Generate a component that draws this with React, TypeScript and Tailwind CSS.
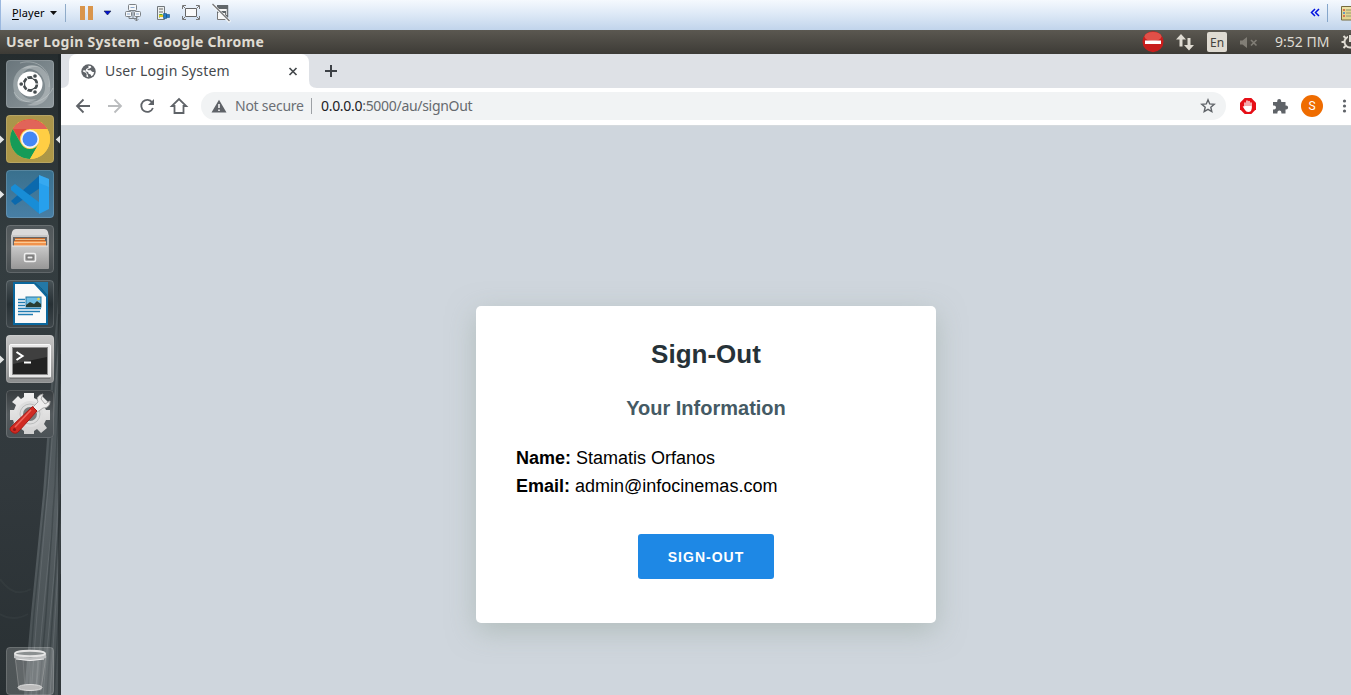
import type { ReactNode } from "react";

const ubuntu = "font-['Noto_Sans',sans-serif]";

function TileFrame({ children, tone, left, right }: { children: ReactNode; tone: string; left?: boolean; right?: boolean }) {
  return (
    <div className="relative h-12 w-12 shrink-0">
      {left && (
        <svg className="absolute -left-1.5 top-5" width="5" height="9" viewBox="0 0 5 9"><path d="M0 .5 4.2 4.5 0 8.5Z" fill="#e4e6e6" /></svg>
      )}
      {right && (
        <svg className="absolute left-[49px] top-5" width="5" height="9" viewBox="0 0 5 9"><path d="M5 .5 .8 4.5 5 8.5Z" fill="#e4e6e6" /></svg>
      )}
      <div className={`h-12 w-12 overflow-hidden rounded-[4px] ${tone}`}>
        <svg width="48" height="48" viewBox="0 0 48 48">
          {children}
          <rect x=".5" y=".5" width="47" height="47" rx="3.5" fill="none" stroke="#fff" strokeOpacity=".15" />
        </svg>
      </div>
    </div>
  );
}

function Launcher() {
  return (
    <aside className="relative flex w-[61px] shrink-0 flex-col gap-[7px] overflow-hidden bg-[#2c3335] pl-1.5 pt-1.5">
      <svg className="absolute inset-0" width="61" height="641" viewBox="0 0 61 641">
        <defs>
          <linearGradient id="wall" x1="0" y1="0" x2="0" y2="1">
            <stop offset="0" stopColor="#252c2e" /><stop offset=".3" stopColor="#343d40" /><stop offset=".65" stopColor="#32393d" /><stop offset="1" stopColor="#293033" />
          </linearGradient>
          <linearGradient id="beam" x1="0" y1="0" x2="0" y2="1">
            <stop offset="0" stopColor="#454e51" /><stop offset=".55" stopColor="#555d61" /><stop offset="1" stopColor="#474f52" />
          </linearGradient>
        </defs>
        <rect width="61" height="641" fill="url(#wall)" />
        <path d="M61 215 54 290 43 440 31 560 24 641H61Z" fill="url(#beam)" />
        <path d="M61 260 51 400 37 560 31 641M61 330 53 460 42 570 36 641M61 400 54 520 43 641M61 470 50 641" stroke="#747b7e" strokeOpacity=".45" fill="none" />
        <path d="M59 260 47 430 34 560 28 641M61 300 55 430 46 560 39 641M61 440 47 641M61 520 54 641" stroke="#343c3f" strokeOpacity=".6" strokeWidth="1.5" fill="none" />
        <path d="M0 525Q14 545 31 535M0 560Q14 568 28 560" stroke="#4a5357" strokeOpacity=".2" fill="none" strokeWidth="2" />
        <path d="M59.5 0V641" stroke="#191f21" strokeOpacity=".5" strokeWidth="3" />
      </svg>
      <TileFrame tone="bg-linear-to-br from-[#69757b] to-[#8e989c]">
        <path d="M8 31C3 11 22-1 37 9 26 3 14 11 13 24 12 34 20 41 31 39 18 46 8 40 8 31Z" fill="#e0e5e7" opacity=".32" />
        <path d="M16 9C27 0 43 8 44 24 46 39 35 48 21 45 35 42 42 32 38 21 35 11 25 7 16 9Z" fill="#e1e5e6" opacity=".34" />
        <path d="M8 32C16 47 39 45 47 28M14 3C31-2 46 10 43 27" stroke="#dce1e2" opacity=".35" fill="none" />
        <circle cx="24" cy="24" r="12.5" fill="#fff" />
        <circle cx="24.4" cy="24" r="6.5" fill="none" stroke="#464d50" strokeWidth="2.8" />
        <g stroke="#fff" strokeWidth="1.1"><path d="M24.4 24H34M24.4 24 19.6 15.7M24.4 24 19.6 32.3" /><circle cx="15.2" cy="24" r="2.4" fill="#464d50" /><circle cx="29" cy="16" r="2.4" fill="#464d50" /><circle cx="29" cy="32" r="2.4" fill="#464d50" /></g>
        <circle cx="24.4" cy="24" r="5" fill="#fff" />
      </TileFrame>
      <TileFrame tone="bg-linear-to-b from-[#aa954b] to-[#ad9746]" left right>
        <circle cx="24" cy="24" r="20" fill="#ffce44" />
        <path d="M6.7 14A20 20 0 0 1 41.3 14H24A10 10 0 0 0 15.3 29Z" fill="#dd4b3e" />
        <path d="M6.7 14 15.3 29A10 10 0 0 0 32.7 29L24 44A20 20 0 0 1 6.7 14Z" fill="#159b58" />
        <path d="M24 14H41.3A20 20 0 0 1 24 44L32.7 29A10 10 0 0 0 24 14Z" fill="#ffce44" />
        <path d="M7 14A20 20 0 0 1 41 14Z" fill="#fff" opacity=".14" />
        <circle cx="24" cy="24" r="9.2" fill="#f3f4f2" /><circle cx="24" cy="24" r="7.5" fill="#4387f5" />
      </TileFrame>
      <TileFrame tone="bg-linear-to-b from-[#39708d] to-[#487fa5]" left>
        <path d="m5 31 4 4L34 18V5Z" fill="#0b69ad" />
        <path d="M5 17 9 14 34 33V44L31 42 5 20Z" fill="#188dd6" /><path d="M33 5 43 9V39L33 44Z" fill="#27a0ed" /><path d="M33 5 43 9V17L33 13Z" fill="#45b2f5" opacity=".5" />
      </TileFrame>
      <TileFrame tone="bg-linear-to-b from-[#50575a] via-[#5a5f61] to-[#454c4f]">
        <defs><linearGradient id="cab" x1="0" y1="0" x2="0" y2="1"><stop stopColor="#c9c9c9" /><stop offset="1" stopColor="#999" /></linearGradient></defs>
        <path d="M6 7Q7 4 10 4H38Q41 4 42 7L43 12H5Z" fill="#dadada" /><rect x="5" y="10" width="38" height="34" rx="1" fill="url(#cab)" />
        <rect x="7" y="12" width="34" height="10" fill="#666" /><path d="M9 13H39V21H9Z" fill="#c66b2c" /><path d="M8 16H40V22H8Z" fill="#f0934d" /><path d="M9 14.5H39M8 17.5H40" stroke="#ffe0b0" strokeOpacity=".7" />
        <path d="M6 21H42V43H6Z" fill="url(#cab)" /><path d="M6 21H42" stroke="#ececec" />
        <rect x="18.5" y="28.5" width="11" height="8" rx="1.5" fill="#999" stroke="#eee" strokeWidth="1.5" /><rect x="21" y="31" width="6" height="3" fill="#eee" stroke="#666" />
      </TileFrame>
      <TileFrame tone="bg-linear-to-b from-[#4a5458] via-[#273034] to-[#3f474b]">
        <path d="M7 2H30L42 14V45H7Z" fill="#0b679d" /><path d="M9 4H28L40 17V43H9Z" fill="#fafafa" />
        <path d="M28 2H42V16Z" fill="#2478a7" /><path d="M29 3Q34 6 41 15" stroke="#125c83" fill="none" />
        <path d="M12 19.5h7m-7 3h7m-7 3h7m-7 3h23m-23 3h22m-22 3h15" stroke="#207db2" strokeWidth="1.5" />
        <rect x="20" y="17" width="15" height="10" fill="#70bee4" stroke="#23769f" /><path d="m20 25 4-3 4 2 3-3 4 3v3H20Z" fill="#283d33" /><circle cx="32.5" cy="19" r="1.3" fill="#ecd744" />
      </TileFrame>
      <TileFrame tone="bg-linear-to-b from-[#c5c5c5] via-[#aaa] to-[#898b8c]" left>
        <rect x="3.5" y="9.5" width="41" height="33" rx="1.5" fill="#e7e7e7" stroke="#f8f8f8" /><rect x="6.5" y="12.5" width="35" height="27" fill="#222" stroke="#8b8b8b" />
        <path d="M7 13H41V22L7 29Z" fill="#4b4b4b" opacity=".7" /><path d="m10.5 17 6 4-6 4M18 27.5h7" stroke="#fff" strokeWidth="2.1" fill="none" /><path d="M4 43H44" stroke="#555" />
      </TileFrame>
      <TileFrame tone="bg-linear-to-b from-[#363b3e] via-[#555b5e] to-[#4b5256]">
        <defs><linearGradient id="gear" x1="0" y1="0" x2="0" y2="1"><stop stopColor="#f1f1f1" /><stop offset="1" stopColor="#d0d0d0" /></linearGradient></defs>
        <path d="M18 7V3H28V8L32 10 36 6 42 12 38 16 40 20H44V30H40L38 34 41 38 35 43 31 39 28 41V44H18V41L14 38 10 42 5 37 8 33 7 30H4V20H8L10 15 6 12 12 6 15 9Z" fill="url(#gear)" />
        <circle cx="24" cy="24" r="13" fill="#dedede" /><circle cx="24" cy="24" r="7" fill="#777b7c" /><circle cx="24" cy="24" r="10" fill="none" stroke="#bcbebe" />
        <path d="m26 18 6-6Q29 6 37 4L35 9l4 5 5-3Q44 18 37 18l-7 5Z" fill="#eee" stroke="#aaa" />
        <path d="M26.5 16.5 31 21 13 41Q10 45 6 42T6 36Z" fill="#d02b23" stroke="#a51a16" /><path d="M25 20 9 37" stroke="#ef655c" strokeWidth="1.5" /><circle cx="8.5" cy="39.5" r="1.5" fill="#8e1818" />
      </TileFrame>
      <div className="mt-[202px]">
        <TileFrame tone="bg-white/18">
          <path d="M9 9 13 43H35L40 9Z" fill="#ddd" fillOpacity=".13" stroke="#bbb" strokeOpacity=".4" />
          <path d="m17 12 2 28M24 12v28m8-28-2 28" stroke="#fff" strokeOpacity=".12" />
          <ellipse cx="24" cy="40.5" rx="12" ry="3" fill="#bbb" stroke="#ddd" /><path d="M8 7Q24 14 40 7V11Q24 17 8 11Z" fill="#bfc1c2" /><ellipse cx="24" cy="6.5" rx="15" ry="2.8" fill="#8b9091" stroke="#e4e4e4" strokeWidth="2" /><path d="M10 12Q24 15 38 12" stroke="#eee" fill="none" />
        </TileFrame>
      </div>
    </aside>
  );
}

function PlayerBar() {
  return (
    <header className="flex h-[30px] shrink-0 items-start border-l border-[#9bb8df] bg-linear-to-b from-[#f5f9fe] via-[#dce8f6] to-[#c1d4eb]">
      <span className="ml-[11px] mt-1 w-[34px] whitespace-nowrap text-[11px] leading-[18px] tracking-[0.1px] text-black font-['Noto_Sans',sans-serif]"><span className="underline underline-offset-2">P</span>layer</span>
      <svg width="200" height="30" viewBox="46 0 200 30">
        <path d="M50 11h7l-3.5 4Z" fill="#111" /><path d="M65.5 4v18" stroke="#8fabc9" />
        <path d="M80 6h5v14h-5zM88 6h5v14h-5z" fill="#d9954c" /><path d="M104 11h7l-3.5 4Z" fill="#0010d8" stroke="#17213a" strokeWidth=".6" />
        <g fill="#f5f7f9" stroke="#7b8085"><rect x="128.5" y="4.5" width="8" height="6" rx="1" /><rect x="125.5" y="11.5" width="6" height="5" rx="1" /><rect x="134.5" y="11.5" width="6" height="5" rx="1" /><path d="M129 17v1.5h8V17M136.5 16v5m-2-2 2 2 2-2M133 10v8" fill="none" /></g>
        <path d="M130.5 7.5h4M127 14h3m6 0h3" stroke="#8eabd0" />
        <path d="M157.5 6.5h7v13h-7Z" fill="#edf0ef" stroke="#71777b" /><path d="M159 9h4m-4 3h4" stroke="#666" /><path d="M159.5 17.5v-3h3" stroke="#4daa36" fill="none" /><path d="M159 16h10" stroke="#e4c71f" strokeWidth="2" /><path d="M163.5 13.5h3v5h-3zM166.5 14.5h3v3h-3z" fill="#287bc4" stroke="#14548c" strokeWidth=".6" />
        <path d="M185.5 8.5h11v8h-11z" fill="#fafafa" stroke="#666" /><path d="m183 6 2 2m12 9 2 2M183 19l2-2m12-9 2-2M182.5 9V5.5H186M196 5.5h3.5V9M182.5 16v3.5h3.5m10 0h3.5V16" stroke="#777" fill="none" />
        <path d="M218 6h9.5v10.5H218z" fill="#f5f5f5" stroke="#70757a" strokeWidth="1.5" /><path d="M217 5h11v4h-11M224 15h4v3h-4" fill="#60666a" /><path d="M217.5 11.5h8v8h-8z" fill="#f8f8f8" stroke="#777" /><path d="M217 11h9v2h-9" fill="#60666a" /><path d="m213 5 17 17" stroke="#f6f9fc" strokeWidth="3" /><path d="m212.5 4 17 17" stroke="#777" strokeWidth="1.3" />
      </svg>
      <svg width="45" height="30" viewBox="1306 0 45 30" className="ml-auto">
        <path d="m1315 9-3.5 3.5 3.5 3.5m4-7-3.5 3.5 3.5 3.5" stroke="#0010df" strokeWidth="1.5" fill="none" /><path d="M1327.5 4v18" stroke="#85a6cb" />
        <path d="M1341.5 6.5H1352V20H1341.5Z" fill="#e2d48e" stroke="#756b3e" /><path d="M1342 8h9" stroke="#f5f0bd" /><path d="M1343 10h2m-2 6h2" stroke="#d5523a" strokeWidth="1.5" /><path d="M1343 13h2" stroke="#3e86cd" strokeWidth="1.5" /><path d="M1346 10h5m-5 3h5m-5 3h5" stroke="#71806b" strokeOpacity=".7" />
      </svg>
    </header>
  );
}

function DesktopPanel() {
  return (
    <div className={`flex h-6 shrink-0 items-center bg-linear-to-b from-[#5b5851] to-[#3d3b36] text-[#dfdbd2] ${ubuntu}`}>
      <h1 className="ml-1.5 whitespace-nowrap text-[14px] font-bold leading-6 tracking-[0.3px]">User Login System - Google Chrome</h1>
      <svg className="ml-auto" width="60" height="24" viewBox="1140 30 60 24">
        <circle cx="1153" cy="41.7" r="10.5" fill="#c81d1c" /><ellipse cx="1153" cy="36.5" rx="8.5" ry="4.5" fill="#ed6b61" opacity=".65" /><path d="M1145 40.5h16v3.5h-16z" fill="#fff" />
        <path d="m1181 34-5 5.5h3.5v7h3v-7h3.5Zm8 16.5-5-5.5h3.5v-7h3v7h3.5Z" fill="#dfdbd2" />
      </svg>
      <span className="ml-[7px] h-5 w-5 rounded-[2px] bg-[#dfdbd2] text-center text-[12px] leading-[21px] text-[#44423d]">En</span>
      <svg className="ml-[13px]" width="20" height="24" viewBox="0 0 20 24"><path d="M0 10.5h2.5L7 7v11l-4.5-3.5H0Z" fill="#817e76" /><path d="m11 10 5.5 5.5m0-5.5L11 15.5" stroke="#817e76" strokeWidth="1.6" /></svg>
      <time className="ml-[15px] w-[54px] whitespace-nowrap text-[14px] leading-6">9:52 ΠΜ</time>
      <svg className="ml-3" width="10" height="24" viewBox="1341 30 10 24"><circle cx="1350" cy="42" r="5.5" fill="none" stroke="#dfdbd2" strokeWidth="2" /><path d="M1341.5 42h3m-1-6 3 3m-3 9 3-3" stroke="#dfdbd2" strokeWidth="2" /><path d="M1350 34v8" stroke="#4c4943" strokeWidth="4" /><path d="M1350 35v7" stroke="#dfdbd2" strokeWidth="2" /></svg>
    </div>
  );
}

function TabStrip() {
  return (
    <div className={`flex h-[34px] shrink-0 bg-[#dee1e6] ${ubuntu}`}>
      <svg width="8" height="34" viewBox="0 0 8 34" className="shrink-0"><path d="M8 26Q8 34 0 34H8Z" fill="#fff" /></svg>
      <div className="flex h-[34px] w-60 shrink-0 items-center rounded-t-lg bg-white">
        <svg className="ml-3" width="15" height="15" viewBox="0 0 15 15"><circle cx="7.5" cy="7.5" r="7.2" fill="#5f6368" /><path d="M7.2 1.7 9.6 1.9 10.4 3.2 8.6 4.6 6.3 5.1 7 6.3H9.8L11 7.8 13.2 8.2Q12.7 11 10.4 12.3L9.6 10.6 7.6 9.8 7.1 8 5.2 7.4 3.6 6.2 1.9 6.4V7.6L4.7 8.7 5.7 10 5.4 12.4 7.3 13.2 7 11.4 5.8 9.1 4.4 7.3 5.2 4.9 7.7 3.5Z" fill="#fff" /></svg>
        <span className="mb-0.5 ml-[9px] whitespace-nowrap text-[14px] tracking-[0.15px] text-[#45494d]">User Login System</span>
        <svg className="ml-auto mr-[11px]" width="10" height="9" viewBox="0 0 10 9"><path d="m1.5 1 7 7m0-7-7 7" stroke="#45494d" strokeWidth="1.7" /></svg>
      </div>
      <svg width="36" height="34" viewBox="0 0 36 34"><path d="M0 26Q0 34 8 34H0Z" fill="#fff" /><path d="M16 17h12m-6-6v12" stroke="#3d4146" strokeWidth="2" /></svg>
    </div>
  );
}

function AddressBar() {
  return (
    <div className={`flex h-[38px] shrink-0 items-center border-b border-[#d5dade] bg-white pb-px ${ubuntu}`}>
      <svg width="140" height="36" viewBox="61 88 140 36" fill="none" stroke="#5f6368" strokeWidth="1.8" className="shrink-0">
        <path d="M90 106H77m6.5-6.5L77 106l6.5 6.5" /><path d="M108 106h13m-6.5-6.5 6.5 6.5-6.5 6.5" stroke="#babcbe" />
        <path d="M152.2 102.4a6 6 0 1 0 .7 5.6" /><path d="M154 99v6h-6Z" fill="#5f6368" stroke="none" /><path d="M174.5 106v7h9v-7h2.7l-7.2-7-7.2 7Z" />
      </svg>
      <div className="flex h-7 w-[1025px] shrink-0 items-center rounded-full bg-[#f1f3f4] text-[14px]">
        <svg className="ml-2.5" width="16" height="14" viewBox="0 0 16 14"><path d="M8 .7 15.5 13.5H.5Z" fill="#5f6368" /><path d="M8 5v4m0 1.5V12" stroke="#fff" strokeWidth="1.5" /></svg>
        <span className="mb-0.5 ml-2 w-[69px] whitespace-nowrap tracking-[-0.25px] text-[#6b6f74]">Not secure</span>
        <span className="ml-[7px] h-4 w-px bg-[#9da1a5]" />
        <span className="mb-0.5 ml-[9px] whitespace-nowrap tracking-[-0.3px] text-[#666a6e]"><span className="text-[#202124]">0.0.0.0</span>:5000/au/signOut</span>
        <svg className="ml-auto mr-2.5" width="16" height="16" viewBox="0 0 16 16"><path d="m8 1.8 1.7 4.1 4.5.4-3.4 2.9 1 4.4L8 11.3l-3.8 2.3 1-4.4L1.8 6.3l4.5-.4Z" fill="none" stroke="#5f6368" strokeWidth="1.4" /></svg>
      </div>
      <svg width="64" height="36" viewBox="1226 88 64 36" className="shrink-0">
        <path d="M1244.7 98h6.6l4.7 4.7v6.6l-4.7 4.7h-6.6l-4.7-4.7v-6.6Z" fill="#e60e16" />
        <path d="M1245 103v5m2-7v6m2-5.5v6m2-4.5v5" stroke="#fff" strokeWidth="1.3" strokeLinecap="round" /><path d="M1244.4 106h7.2v2.5q0 3.5-3.5 3.5-2 0-3.1-2l-2.3-3.5q1-.8 1.7.2Z" fill="#fff" />
        <path d="M1273 102h4.2v-1a2 2 0 0 1 4 0v1h4.3v3.5h.6a2 2 0 0 1 0 4h-.6v4h-4.1v-1a2 2 0 0 0-4 0v1H1273v-4h1a2 2 0 0 0 0-4h-1Z" fill="#5f6368" />
      </svg>
      <span className="ml-[11px] h-[22px] w-[22px] shrink-0 rounded-full bg-[#ef6c00] text-center text-[12px] leading-[22px] text-white font-['Roboto',sans-serif]">S</span>
      <svg className="ml-[18px] shrink-0" width="6" height="18" viewBox="0 0 6 18" fill="#5f6368"><circle cx="3.5" cy="4" r="1.6" /><circle cx="3.5" cy="9" r="1.6" /><circle cx="3.5" cy="14" r="1.6" /></svg>
    </div>
  );
}

export default function App() {
  return (
    <div className="flex h-screen flex-col overflow-hidden">
      <PlayerBar />
      <DesktopPanel />
      <div className="flex min-h-0 flex-1">
        <Launcher />
        <div className="flex min-w-0 flex-1 flex-col">
          <TabStrip />
          <AddressBar />
          <main className="flex flex-1 justify-center bg-[#cfd6dd] pt-[180px] font-['Liberation_Sans',sans-serif]">
            <section className="flex h-[317px] w-[460px] flex-col items-center rounded-[5px] bg-white px-10 shadow-[0_8px_28px_rgba(150,165,155,0.5)]">
              <h2 className="mt-8 text-[26px] font-bold leading-8 text-[#263238]">Sign-Out</h2>
              <h3 className="mt-[26px] text-[20px] font-bold leading-6 text-[#455a64]">Your Information</h3>
              <div className="mt-6 w-full text-[18px] leading-7 text-black">
                <p><b>Name:</b> Stamatis Orfanos</p>
                <p><b>Email:</b> admin@infocinemas.com</p>
              </div>
              <button className="mt-[34px] h-[45px] w-[136px] rounded-[3px] bg-[#1e88e5] pt-0.5 text-[14px] font-bold tracking-[1px] text-white">SIGN-OUT</button>
            </section>
          </main>
        </div>
      </div>
    </div>
  );
}
